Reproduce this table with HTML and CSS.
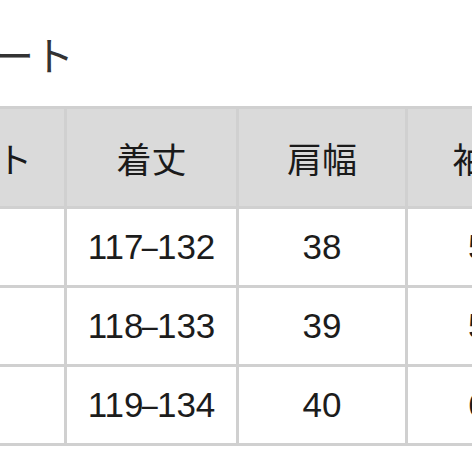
FILE: index.html
```html
<!DOCTYPE html>
<html lang="ja">
<head>
<meta charset="utf-8">
<link rel="stylesheet" href="styles.css">
</head>
<body>
<div class="page">
  <h1 class="title">ート</h1>
  <table class="chart">
    <colgroup>
      <col class="c1">
      <col class="c2">
      <col class="c3">
      <col class="c4">
    </colgroup>
    <thead>
      <tr>
        <th>バスト</th>
        <th>着丈</th>
        <th>肩幅</th>
        <th>袖丈</th>
      </tr>
    </thead>
    <tbody>
      <tr>
        <td>88</td>
        <td>117<span class="dash">–</span>132</td>
        <td>38</td>
        <td>58</td>
      </tr>
      <tr>
        <td>92</td>
        <td>118<span class="dash">–</span>133</td>
        <td>39</td>
        <td>59</td>
      </tr>
      <tr>
        <td>96</td>
        <td>119<span class="dash">–</span>134</td>
        <td>40</td>
        <td>60</td>
      </tr>
    </tbody>
  </table>
</div>
</body>
</html>
```

FILE: styles.css
```css
html, body {
  margin: 0;
  padding: 0;
  background: #ffffff;
}

.page {
  width: 472px;
  height: 472px;
  overflow: hidden;
  font-family: "Liberation Sans", "Noto Sans CJK JP", sans-serif;
  color: #1c1c1c;
}

.title {
  margin: 0 0 32px -6px;
  padding-top: 34px;
  font-family: "Noto Sans CJK JP", sans-serif;
  font-weight: 400;
  font-size: 40px;
  line-height: 40px;
  height: 40px;
  color: #333333;
  white-space: nowrap;
}

.chart {
  width: 675px;
  margin-left: -108px;
  border-collapse: separate;
  border-spacing: 0;
  border-top: 3px solid #d0d0d0;
  border-left: 3px solid #d0d0d0;
  table-layout: fixed;
}

.chart th,
.chart td {
  padding: 0;
  text-align: center;
  border-right: 3px solid #d0d0d0;
  border-bottom: 3px solid #d0d0d0;
  white-space: nowrap;
}

.chart th {
  height: 97px;
  background: #dadada;
  font-family: "Noto Sans CJK JP", sans-serif;
  font-weight: 400;
  font-size: 35px;
  color: #1a1a1a;
}

.chart td {
  height: 76px;
  background: #ffffff;
  font-size: 35px;
}

.dash {
  display: inline-block;
  transform: scaleX(0.82);
  margin: 0 -3px;
}

.c1 { width: 172px; }
.c2 { width: 172px; }
.c3 { width: 169px; }
.c4 { width: 162px; }
```
